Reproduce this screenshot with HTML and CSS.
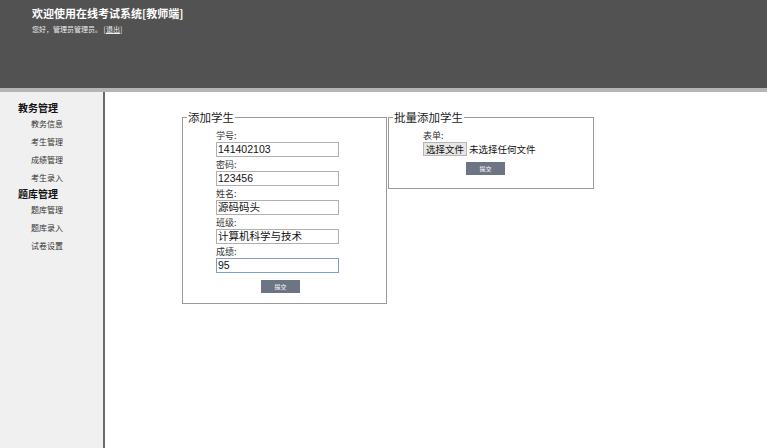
FILE: index.html
```html
<!DOCTYPE html>
<html>
<head>
<meta charset="utf-8">
<link rel="stylesheet" href="styles.css">
</head>
<body>
<header class="top">
  <h1 class="title">欢迎使用在线考试系统[教师端]</h1>
  <div class="hello">您好，管理员管理员。 [<a class="logout">退出</a>]</div>
</header>
<div class="body">
  <aside class="side">
    <div class="group">教务管理</div>
    <div class="item">教务信息</div>
    <div class="item">考生管理</div>
    <div class="item">成绩管理</div>
    <div class="item">考生录入</div>
    <div class="group">题库管理</div>
    <div class="item">题库管理</div>
    <div class="item">题库录入</div>
    <div class="item">试卷设置</div>
  </aside>
  <main class="main">
    <fieldset class="box box-add">
      <legend class="legend">添加学生</legend>
      <div class="form">
        <div class="field"><div class="lab">学号:</div><div class="inp">141402103</div></div>
        <div class="field"><div class="lab">密码:</div><div class="inp">123456</div></div>
        <div class="field"><div class="lab">姓名:</div><div class="inp">源码码头</div></div>
        <div class="field"><div class="lab">班级:</div><div class="inp">计算机科学与技术</div></div>
        <div class="field"><div class="lab">成绩:</div><div class="inp focus">95</div></div>
        <div class="act"><span class="btn">提交</span></div>
      </div>
    </fieldset>
    <fieldset class="box box-batch">
      <legend class="legend">批量添加学生</legend>
      <div class="form form-batch">
        <div class="lab">表单:</div>
        <div class="file"><span class="filebtn">选择文件</span><span class="filetxt">未选择任何文件</span></div>
        <div class="act act2"><span class="btn">提交</span></div>
      </div>
    </fieldset>
  </main>
</div>
</body>
</html>
```

FILE: styles.css
```css
* { box-sizing: border-box; }
html, body { margin: 0; padding: 0; }
body {
  width: 767px;
  height: 448px;
  overflow: hidden;
  font-family: "Noto Sans CJK SC", "Liberation Sans", sans-serif;
  background: #fff;
  color: #222;
  display: flex;
  flex-direction: column;
}
.top {
  height: 92px;
  flex: none;
  background: #525252;
  border-bottom: 4px solid #b4b4b4;
  padding: 5px 0 0 32px;
  color: #fff;
}
.title {
  margin: 0;
  font-size: 11px;
  font-weight: bold;
  line-height: 17px;
}
.hello {
  margin-top: 2px;
  font-size: 7px;
  line-height: 10px;
  color: #eee;
}
.logout { text-decoration: underline; }
.body {
  flex: 1;
  display: flex;
}
.side {
  width: 105px;
  flex: none;
  background: #f0f0f0;
  border-right: 2px solid #6a6a6a;
  padding: 9px 0 0 18px;
}
.group {
  font-size: 10px;
  font-weight: bold;
  line-height: 13px;
  color: #111;
}
.item {
  font-size: 8px;
  line-height: 18px;
  padding-left: 13px;
  color: #333;
}
.group + .item { margin-top: 1px; }
.main {
  flex: 1;
  display: flex;
  align-items: flex-start;
  padding: 18px 0 0 77px;
  gap: 1px;
}
.box {
  margin: 0;
  border: 1px solid #9a9a9a;
  padding: 0;
}
.box-add { width: 205px; height: 194px; }
.box-batch { width: 206px; height: 79px; }
.legend {
  font-size: 11.5px;
  line-height: 14px;
  padding: 0 1px;
  margin-left: 4px;
  color: #222;
}
.form {
  padding: 5px 0 0 33px;
}
.form-batch { padding-left: 34px; }
.field {
  width: 123px;
  margin-bottom: 1px;
}
.lab {
  font-size: 9px;
  line-height: 13px;
  color: #333;
}
.inp {
  height: 15px;
  border: 1px solid #b0b0b0;
  font-family: "Liberation Sans", "Noto Sans CJK SC", sans-serif;
  font-size: 10.5px;
  line-height: 13px;
  padding-left: 1px;
  color: #111;
}
.inp.focus { border-color: #7b9fd4; }
.act {
  display: flex;
  width: 123px;
  padding: 6px 0 0 45px;
}
.btn {
  display: block;
  width: 39px;
  height: 13px;
  background: #6d7484;
  color: #fff;
  font-size: 6px;
  line-height: 13px;
  text-align: center;
}
.file {
  display: flex;
  align-items: center;
  height: 14px;
  font-size: 9.5px;
}
.filebtn {
  background: #e6e6e6;
  border: 1px solid #b5b5b5;
  padding: 0 2px;
  line-height: 12px;
  color: #111;
}
.filetxt {
  margin-left: 2px;
  color: #111;
}
.act2 {
  padding: 6px 0 0 43px;
}
```
